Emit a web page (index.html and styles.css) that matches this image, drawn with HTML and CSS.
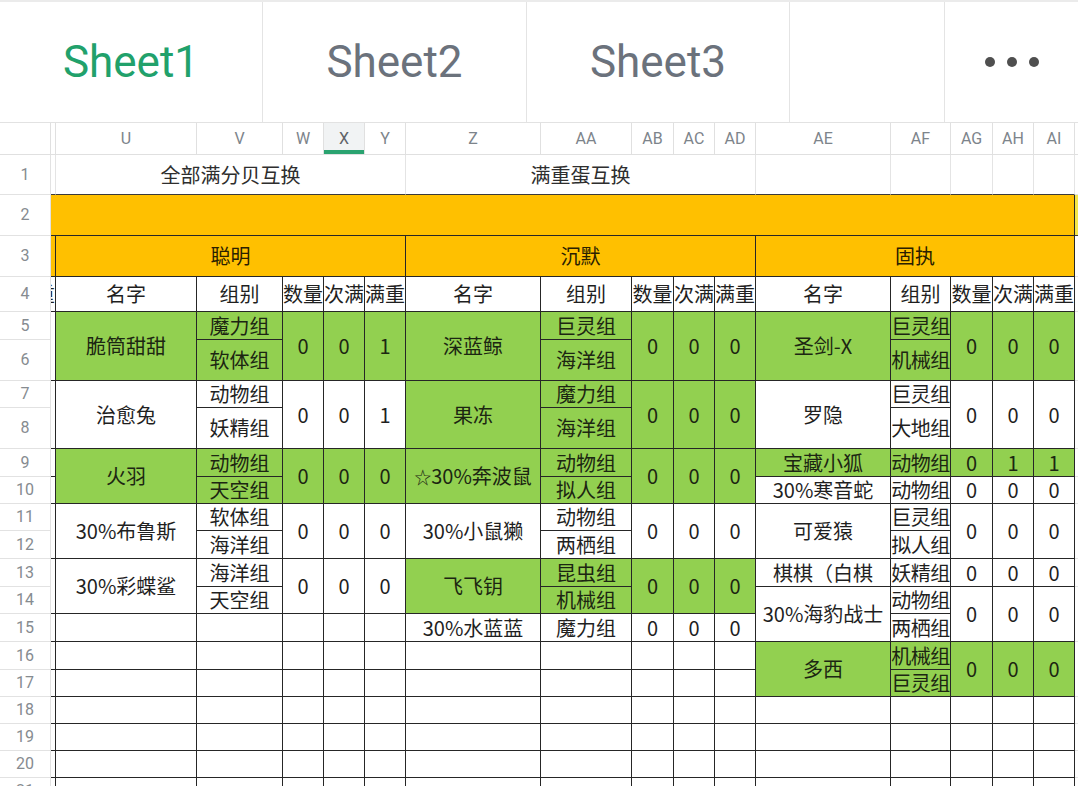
FILE: index.html
```html
<!DOCTYPE html>
<html lang="zh">
<head>
<meta charset="utf-8">
<title>Sheet1</title>
<link rel="stylesheet" href="styles.css">
</head>
<body>
<div class="tabs">
  <div class="tab tw1 active">Sheet1</div>
  <div class="tab tw2">Sheet2</div>
  <div class="tab tw1">Sheet3</div>
  <div class="tab tw4"></div>
  <div class="tab more"><span class="dot"></span><span class="dot"></span><span class="dot"></span></div>
</div>
<div class="sheet">
  <!-- column header -->
  <div class="c ch corner"></div><div class="c ch"></div>
  <div class="c ch">U</div><div class="c ch">V</div><div class="c ch">W</div><div class="c ch sel">X</div><div class="c ch">Y</div>
  <div class="c ch">Z</div><div class="c ch">AA</div><div class="c ch">AB</div><div class="c ch">AC</div><div class="c ch">AD</div>
  <div class="c ch">AE</div><div class="c ch">AF</div><div class="c ch">AG</div><div class="c ch">AH</div><div class="c ch">AI</div>
  <div class="c ch edge"></div>

  <!-- row 1 -->
  <div class="c rh">1</div><div class="c kb"></div>
  <div class="c kb s5 title">全部满分贝互换</div>
  <div class="c kb s5 title">满重蛋互换</div>
  <div class="c kb"></div><div class="c kb"></div><div class="c kb"></div><div class="c kb"></div><div class="c kb"></div>
  <div class="c edge"></div>

  <!-- row 2 -->
  <div class="c rh">2</div>
  <div class="c o k s16"></div>
  <div class="c ylw edge"></div>

  <!-- row 3 -->
  <div class="c rh">3</div><div class="c o k"></div>
  <div class="c o k s5">聪明</div>
  <div class="c o k s5">沉默</div>
  <div class="c o k s5">固执</div>
  <div class="c edge"></div>

  <!-- row 4 -->
  <div class="c rh">4</div><div class="c k frag"><span>重</span></div>
  <div class="c k">名字</div><div class="c k">组别</div><div class="c k">数量</div><div class="c k">次满</div><div class="c k">满重</div>
  <div class="c k">名字</div><div class="c k">组别</div><div class="c k">数量</div><div class="c k">次满</div><div class="c k">满重</div>
  <div class="c k">名字</div><div class="c k">组别</div><div class="c k">数量</div><div class="c k">次满</div><div class="c k">满重</div>
  <div class="c edge"></div>

  <!-- row 5 -->
  <div class="c rh">5</div><div class="c k r2"></div>
  <div class="c k g r2">脆筒甜甜</div><div class="c k g">魔力组</div><div class="c k g r2">0</div><div class="c k g r2">0</div><div class="c k g r2">1</div>
  <div class="c k g r2">深蓝鲸</div><div class="c k g">巨灵组</div><div class="c k g r2">0</div><div class="c k g r2">0</div><div class="c k g r2">0</div>
  <div class="c k g r2">圣剑-X</div><div class="c k g tight">巨灵组</div><div class="c k g r2">0</div><div class="c k g r2">0</div><div class="c k g r2">0</div>
  <div class="c edge r2"></div>
  <!-- row 6 -->
  <div class="c rh">6</div>
  <div class="c k g">软体组</div><div class="c k g">海洋组</div><div class="c k g tight">机械组</div>

  <!-- row 7 -->
  <div class="c rh">7</div><div class="c k r2"></div>
  <div class="c k r2">治愈兔</div><div class="c k">动物组</div><div class="c k r2">0</div><div class="c k r2">0</div><div class="c k r2">1</div>
  <div class="c k g r2">果冻</div><div class="c k g">魔力组</div><div class="c k g r2">0</div><div class="c k g r2">0</div><div class="c k g r2">0</div>
  <div class="c k r2">罗隐</div><div class="c k tight">巨灵组</div><div class="c k r2">0</div><div class="c k r2">0</div><div class="c k r2">0</div>
  <div class="c edge r2"></div>
  <!-- row 8 -->
  <div class="c rh">8</div>
  <div class="c k">妖精组</div><div class="c k g">海洋组</div><div class="c k tight">大地组</div>

  <!-- row 9 -->
  <div class="c rh">9</div><div class="c k"></div>
  <div class="c k g r2">火羽</div><div class="c k g">动物组</div><div class="c k g r2">0</div><div class="c k g r2">0</div><div class="c k g r2">0</div>
  <div class="c k g r2"><span class="star">☆</span>30%奔波鼠</div><div class="c k g">动物组</div><div class="c k g r2">0</div><div class="c k g r2">0</div><div class="c k g r2">0</div>
  <div class="c k g">宝藏小狐</div><div class="c k g tight">动物组</div><div class="c k g">0</div><div class="c k g">1</div><div class="c k g">1</div>
  <div class="c edge"></div>
  <!-- row 10 -->
  <div class="c rh">10</div><div class="c k"></div>
  <div class="c k g">天空组</div><div class="c k g">拟人组</div>
  <div class="c k">30%寒音蛇</div><div class="c k tight">动物组</div><div class="c k">0</div><div class="c k">0</div><div class="c k">0</div>
  <div class="c edge"></div>

  <!-- row 11 -->
  <div class="c rh">11</div><div class="c k r2"></div>
  <div class="c k r2">30%布鲁斯</div><div class="c k">软体组</div><div class="c k r2">0</div><div class="c k r2">0</div><div class="c k r2">0</div>
  <div class="c k r2">30%小鼠獭</div><div class="c k">动物组</div><div class="c k r2">0</div><div class="c k r2">0</div><div class="c k r2">0</div>
  <div class="c k r2">可爱猿</div><div class="c k tight">巨灵组</div><div class="c k r2">0</div><div class="c k r2">0</div><div class="c k r2">0</div>
  <div class="c edge r2"></div>
  <!-- row 12 -->
  <div class="c rh">12</div>
  <div class="c k">海洋组</div><div class="c k">两栖组</div><div class="c k tight">拟人组</div>

  <!-- row 13 -->
  <div class="c rh">13</div><div class="c k r2"></div>
  <div class="c k r2">30%彩蝶鲨</div><div class="c k">海洋组</div><div class="c k r2">0</div><div class="c k r2">0</div><div class="c k r2">0</div>
  <div class="c k g r2">飞飞钥</div><div class="c k g">昆虫组</div><div class="c k g r2">0</div><div class="c k g r2">0</div><div class="c k g r2">0</div>
  <div class="c k">棋棋（白棋</div><div class="c k tight">妖精组</div><div class="c k">0</div><div class="c k">0</div><div class="c k">0</div>
  <div class="c edge"></div>
  <!-- row 14 -->
  <div class="c rh">14</div>
  <div class="c k">天空组</div><div class="c k g">机械组</div>
  <div class="c k r2">30%海豹战士</div><div class="c k tight">动物组</div><div class="c k r2">0</div><div class="c k r2">0</div><div class="c k r2">0</div>
  <div class="c edge r2"></div>

  <!-- row 15 -->
  <div class="c rh">15</div><div class="c k"></div>
  <div class="c k"></div><div class="c k"></div><div class="c k"></div><div class="c k"></div><div class="c k"></div>
  <div class="c k">30%水蓝蓝</div><div class="c k">魔力组</div><div class="c k">0</div><div class="c k">0</div><div class="c k">0</div>
  <div class="c k tight">两栖组</div>

  <!-- row 16 -->
  <div class="c rh">16</div><div class="c k"></div>
  <div class="c k"></div><div class="c k"></div><div class="c k"></div><div class="c k"></div><div class="c k"></div>
  <div class="c k"></div><div class="c k"></div><div class="c k"></div><div class="c k"></div><div class="c k"></div>
  <div class="c k g r2">多西</div><div class="c k g tight">机械组</div><div class="c k g r2">0</div><div class="c k g r2">0</div><div class="c k g r2">0</div>
  <div class="c edge r2"></div>
  <!-- row 17 -->
  <div class="c rh">17</div><div class="c k"></div>
  <div class="c k"></div><div class="c k"></div><div class="c k"></div><div class="c k"></div><div class="c k"></div>
  <div class="c k"></div><div class="c k"></div><div class="c k"></div><div class="c k"></div><div class="c k"></div>
  <div class="c k g tight">巨灵组</div>

  <!-- rows 18-21 -->
  <div class="c rh">18</div><div class="c k"></div>
  <div class="c k"></div><div class="c k"></div><div class="c k"></div><div class="c k"></div><div class="c k"></div>
  <div class="c k"></div><div class="c k"></div><div class="c k"></div><div class="c k"></div><div class="c k"></div>
  <div class="c k"></div><div class="c k"></div><div class="c k"></div><div class="c k"></div><div class="c k"></div>
  <div class="c edge"></div>

  <div class="c rh">19</div><div class="c k"></div>
  <div class="c k"></div><div class="c k"></div><div class="c k"></div><div class="c k"></div><div class="c k"></div>
  <div class="c k"></div><div class="c k"></div><div class="c k"></div><div class="c k"></div><div class="c k"></div>
  <div class="c k"></div><div class="c k"></div><div class="c k"></div><div class="c k"></div><div class="c k"></div>
  <div class="c edge"></div>

  <div class="c rh">20</div><div class="c k"></div>
  <div class="c k"></div><div class="c k"></div><div class="c k"></div><div class="c k"></div><div class="c k"></div>
  <div class="c k"></div><div class="c k"></div><div class="c k"></div><div class="c k"></div><div class="c k"></div>
  <div class="c k"></div><div class="c k"></div><div class="c k"></div><div class="c k"></div><div class="c k"></div>
  <div class="c edge"></div>

  <div class="c rh">21</div><div class="c k"></div>
  <div class="c k"></div><div class="c k"></div><div class="c k"></div><div class="c k"></div><div class="c k"></div>
  <div class="c k"></div><div class="c k"></div><div class="c k"></div><div class="c k"></div><div class="c k"></div>
  <div class="c k"></div><div class="c k"></div><div class="c k"></div><div class="c k"></div><div class="c k"></div>
  <div class="c edge"></div>
</div>
</body>
</html>
```

FILE: styles.css
```css
* { box-sizing: border-box; margin: 0; padding: 0; }
html, body { width: 1078px; height: 786px; overflow: hidden; background: #fff; }
body { font-family: Roboto, "Noto Sans CJK SC", sans-serif; color: #222; }

.tabs {
  display: flex;
  height: 123px;
  border-top: 2px solid #ebebeb;
  border-bottom: 1px solid #e2e2e2;
}
.tab {
  display: flex;
  align-items: center;
  justify-content: center;
  font-size: 44px;
  color: #6b727c;
  border-right: 1px solid #e4e4e4;
}
.tab.active { color: #21a16b; }
.tw1 { width: 263px; }
.tw2 { width: 264px; }
.tw4 { width: 155px; }
.more { flex: 1; gap: 12px; border-right: none; }
.dot { width: 10px; height: 10px; border-radius: 50%; background: #4f4f4f; }

.sheet {
  display: grid;
  grid-template-columns: 51px 5px 141px 86px 41px 41px 41px 135px 91px 42px 41px 41px 135px 60px 42px 41px 41px 3px;
  grid-template-rows: 32px 40px 41px 41px 35px 28px 41px 27px 41px 28px 27px 27px 28px 28px 27px 28px 28px 27px 27px 27px 27px 27px;
  font-family: "Noto Sans CJK SC", sans-serif;
}
.c {
  display: flex;
  align-items: center;
  justify-content: center;
  border-right: 1px solid #e4e4e4;
  border-bottom: 1px solid #e4e4e4;
  font-size: 20px;
  line-height: 1;
  white-space: nowrap;
  min-width: 0;
  color: #1f1f1f;
}
.ch {
  font-family: Roboto, sans-serif;
  font-size: 16px;
  color: #7d848b;
  border-color: #e0e0e0;
}
.corner { border-right-color: #e0e0e0; }
.sel { background: #f1f3f4; box-shadow: inset 0 -4px 0 #2aa370; color: #5f6368; }
.rh {
  font-family: Roboto, sans-serif;
  font-size: 16px;
  color: #868b90;
  border-color: #e2e2e2;
}
.edge { border-right: none; }
.title { color: #2e2e2e; }
.k { border-color: #262626; }
.kb { border-bottom-color: #3a3a3a; }
.o { background: #ffc000; color: #2a2000; }
.g { background: #92d050; color: #1c2612; }
.ylw { background: #f3e64a; border-bottom-color: #3a3a3a; }
.s5 { grid-column: span 5; }
.s16 { grid-column: span 16; }
.r2 { grid-row: span 2; }
.frag { justify-content: flex-end; overflow: hidden; }
.star { font-size: 17px; }
.tight { letter-spacing: -0.5px; }
```
